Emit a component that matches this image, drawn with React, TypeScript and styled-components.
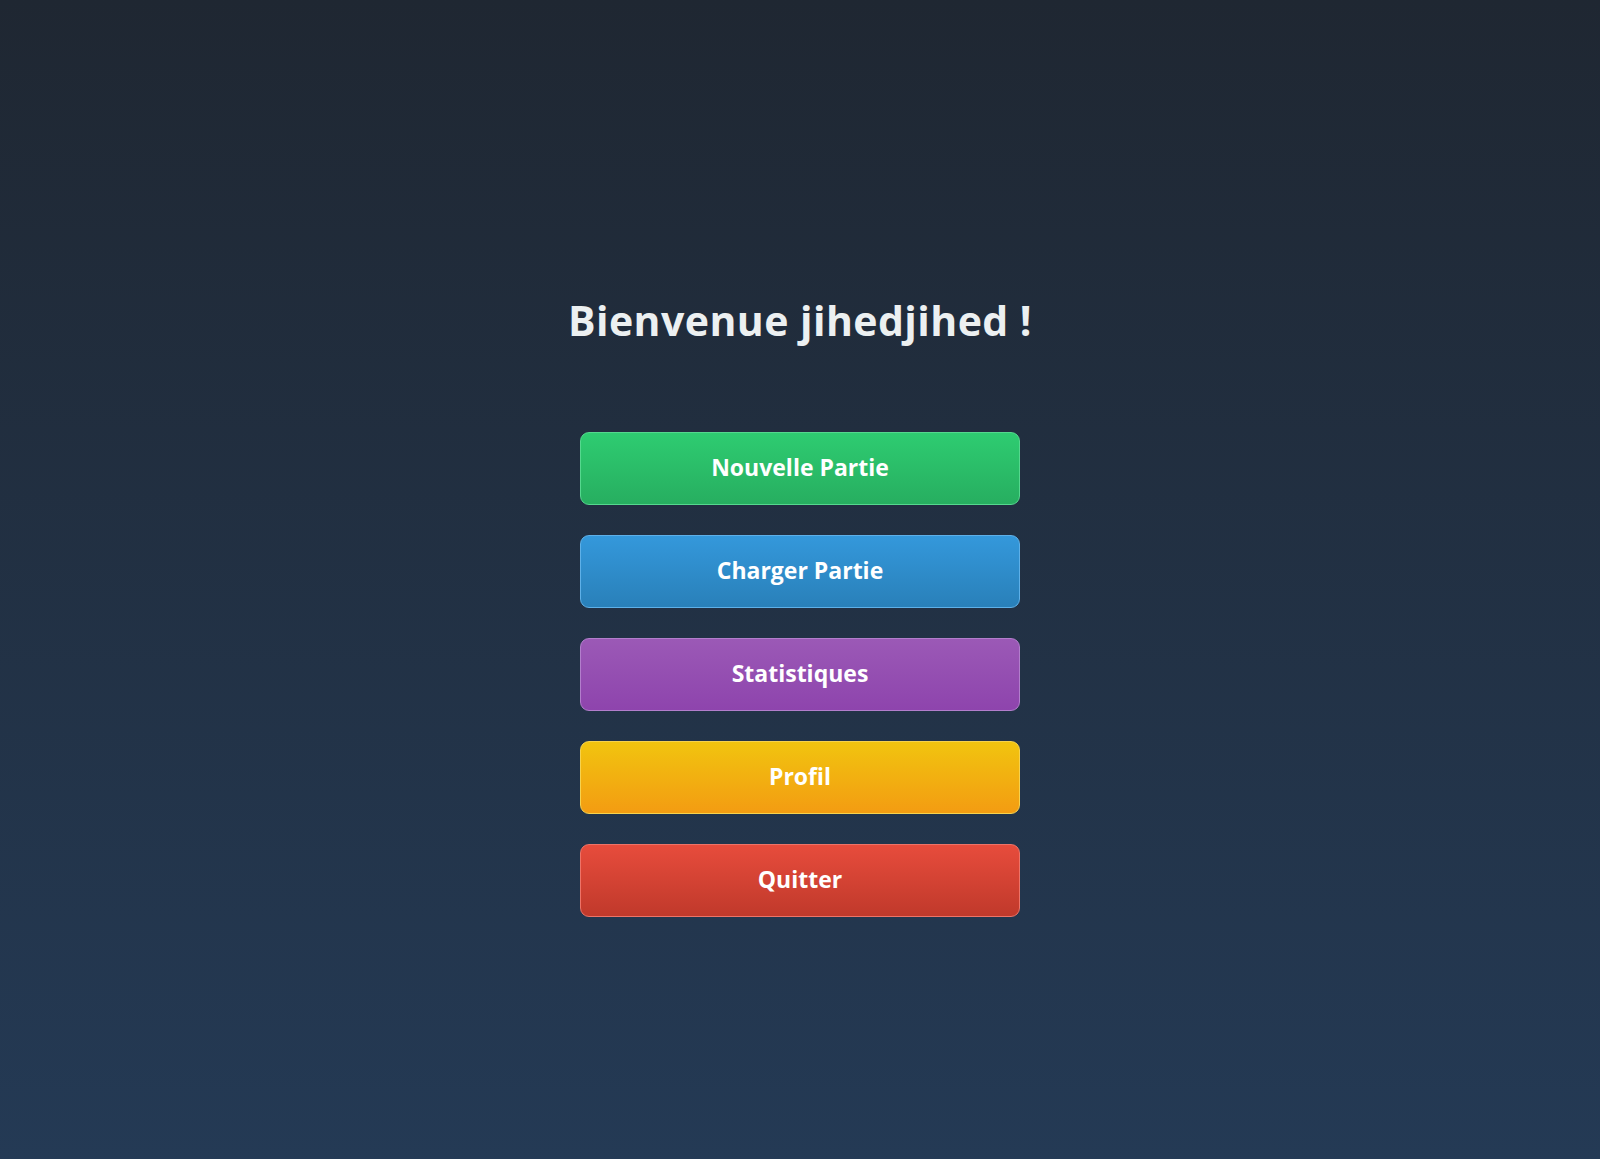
import React from "react";
import styled, { createGlobalStyle } from "styled-components";

const Global = createGlobalStyle`
  html, body { margin: 0; padding: 0; }
  body {
    font-family: "Open Sans", "DejaVu Sans", sans-serif;
    background: #1f2833;
  }
`;

const Page = styled.div`
  width: 100%;
  min-height: 1159px;
  box-sizing: border-box;
  background: linear-gradient(180deg, #1f2732 0%, #243a55 100%);
  display: flex;
  flex-direction: column;
  align-items: center;
  padding-top: 295px;
`;

const Title = styled.h1`
  margin: 0 0 87px;
  font-size: 41px;
  line-height: 50px;
  font-weight: 700;
  letter-spacing: 0.45px;
  color: #ecf0f1;
`;

const Menu = styled.div`
  display: flex;
  flex-direction: column;
  gap: 30px;
`;

type Variant = { from: string; to: string; border: string };

const variants: Record<string, Variant> = {
  green: { from: "#2ecc71", to: "#27ae60", border: "#55d88e" },
  blue: { from: "#3498db", to: "#2980b9", border: "#5eb0e8" },
  purple: { from: "#9b59b6", to: "#8e44ad", border: "#b27ecc" },
  yellow: { from: "#f1c40f", to: "#f39c12", border: "#f6d24e" },
  red: { from: "#e74c3c", to: "#c0392b", border: "#ee7367" },
};

const MenuButton = styled.button<{ $v: Variant }>`
  width: 440px;
  height: 73px;
  box-sizing: border-box;
  border: 1px solid ${(p) => p.$v.border};
  border-radius: 9px;
  background: linear-gradient(180deg, ${(p) => p.$v.from} 0%, ${(p) => p.$v.to} 100%);
  color: #ffffff;
  font-family: "Open Sans", "DejaVu Sans", sans-serif;
  font-size: 23px;
  font-weight: 700;
  cursor: pointer;
  padding: 0 0 3px;
`;

const items: { label: string; v: string }[] = [
  { label: "Nouvelle Partie", v: "green" },
  { label: "Charger Partie", v: "blue" },
  { label: "Statistiques", v: "purple" },
  { label: "Profil", v: "yellow" },
  { label: "Quitter", v: "red" },
];

export default function App() {
  return (
    <>
      <Global />
      <Page>
        <Title>Bienvenue jihedjihed !</Title>
        <Menu>
          {items.map((it) => (
            <MenuButton key={it.label} $v={variants[it.v]}>
              {it.label}
            </MenuButton>
          ))}
        </Menu>
      </Page>
    </>
  );
}
